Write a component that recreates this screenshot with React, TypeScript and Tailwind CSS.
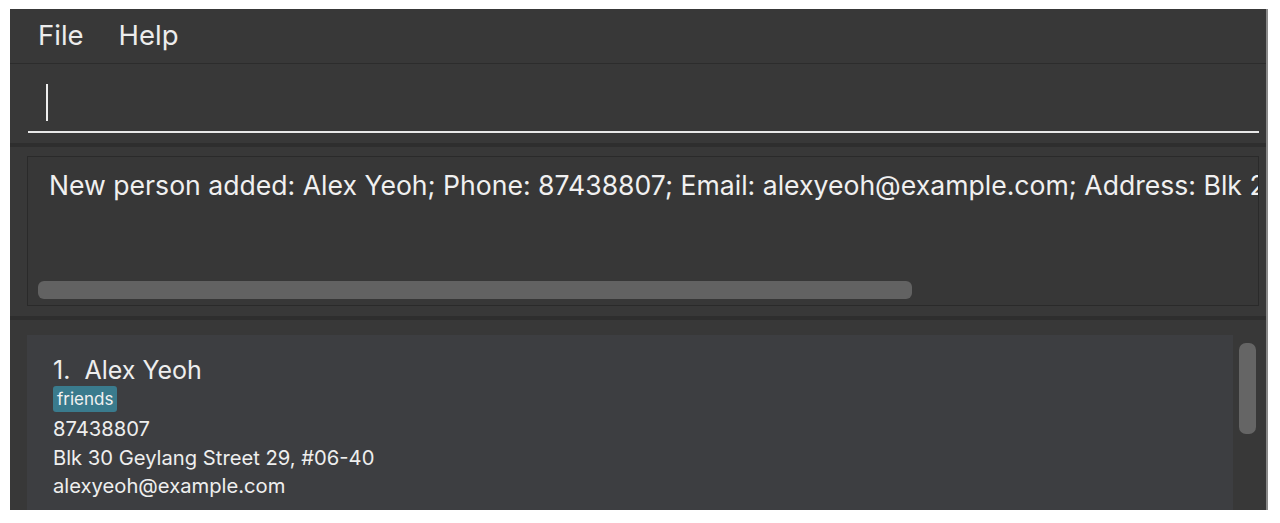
const font = { fontFamily: 'Inter, "Open Sans", "Liberation Sans", sans-serif' };

const App = () => {
  return (
    <div className="w-full h-[523px] bg-white pt-[9px] pl-[10px]" style={font}>
      <div className="w-[1258px] h-[501px] bg-[#383838] flex flex-col overflow-hidden border-r-2 border-[#8a8a8a] text-white">
        {/* menu bar */}
        <div className="h-[55px] flex items-center pl-[28px] gap-[35px] text-[27.5px] text-[#ececec] border-b border-[#2c2c2c] shrink-0">
          <span>File</span>
          <span>Help</span>
        </div>

        {/* command box */}
        <div className="h-[79px] shrink-0 pl-[18px] pr-[7px] pt-[20px]">
          <div className="h-[49px] border-b-2 border-[#e8e8e8] pl-[18px]">
            <div className="w-[2px] h-[37px] bg-[#eeeeee]" />
          </div>
        </div>

        <div className="h-[4px] bg-[#2e2e2e] shrink-0" />

        {/* result display */}
        <div className="h-[169px] shrink-0 pl-[17px] pr-[7px] pt-[9px]">
          <div className="h-[150px] border border-[#2a2a2a] bg-[#373737] relative overflow-hidden">
            <div className="pl-[21px] pt-[9px] whitespace-nowrap text-[26.6px] text-[#f0f0f0]">
              New person added: Alex Yeoh; Phone: 87438807; Email: alexyeoh@example.com; Address: Blk 2
            </div>
            <div className="absolute left-[10px] top-[124px] w-[874px] h-[18px] rounded-[6px] bg-[#626262]" />
          </div>
        </div>

        <div className="h-[4px] bg-[#2e2e2e] shrink-0" />

        {/* person list */}
        <div className="flex-1 flex pl-[17px] pt-[15px]">
          <div className="w-[1206px] bg-[#3d3e41] pl-[26px] pt-[20px] text-[#eeeeee]">
            <div className="text-[25px] leading-[30px]">1.&nbsp; Alex Yeoh</div>
            <div className="flex mt-[1px]">
              <span className="bg-[#3a7b8d] rounded-[3px] px-[4px] h-[26px] leading-[26px] text-[17px] text-[#f2f2f2]">friends</span>
            </div>
            <div className="text-[20.2px] leading-[28.5px] mt-[3px]">87438807</div>
            <div className="text-[20.2px] leading-[28.5px]">Blk 30 Geylang Street 29, #06-40</div>
            <div className="text-[20.2px] leading-[28.5px]">alexyeoh@example.com</div>
          </div>
          <div className="flex-1 pl-[6px] pt-[8px]">
            <div className="w-[17px] h-[91px] rounded-[7px] bg-[#656565]" />
          </div>
        </div>
      </div>
    </div>
  );
};

export default App;
